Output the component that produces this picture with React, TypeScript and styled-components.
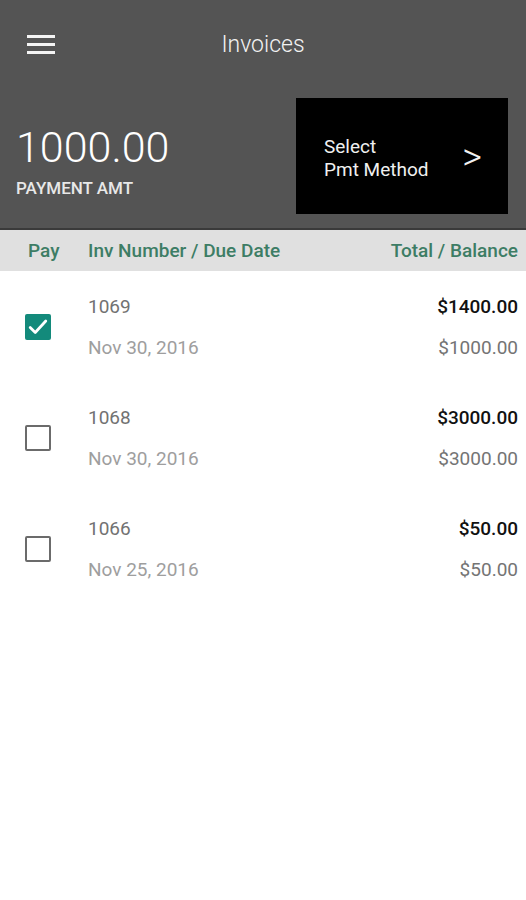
import styled, { createGlobalStyle } from "styled-components"

const GlobalStyle = createGlobalStyle`
    html, body {
        margin: 0;
        padding: 0;
        background: #ffffff;
        font-family: Roboto, "Liberation Sans", sans-serif;
    }
`

const Page = styled.div`
    width: 526px;
    min-height: 900px;
    background: #ffffff;
`

const Header = styled.header`
    background-color: #545454;
    border-bottom: 2px solid #3a3a3a;
`

const Toolbar = styled.div`
    height: 88px;
    display: grid;
    grid-template-columns: 80px 1fr 80px;
    align-items: center;
`

const MenuButton = styled.button`
    background: none;
    border: none;
    padding: 0 0 0 27px;
    display: flex;
    flex-direction: column;
    gap: 5px;
    cursor: pointer;

    span {
        display: block;
        width: 28px;
        height: 3px;
        background: #f4f4f4;
    }
`

const Title = styled.h1`
    margin: 0;
    text-align: center;
    color: #f2f2f2;
    font-size: 23px;
    font-weight: 300;
`

const Summary = styled.div`
    display: flex;
    justify-content: space-between;
    align-items: center;
    padding: 10px 18px 14px 16px;
`

const Amount = styled.div`
    display: flex;
    flex-direction: column;
    padding-top: 8px;
`

const AmountValue = styled.span`
    color: #ffffff;
    font-size: 43px;
    font-weight: 300;
    line-height: 50px;
`

const AmountLabel = styled.span`
    color: #e8e8e8;
    font-size: 17px;
    font-weight: 500;
    margin-top: 6px;
`

const MethodButton = styled.button`
    width: 212px;
    height: 116px;
    background: #000000;
    border: none;
    display: flex;
    align-items: center;
    justify-content: space-between;
    padding: 0 26px 0 28px;
    color: #f0f0f0;
    font-family: inherit;
    cursor: pointer;
`

const MethodText = styled.span`
    text-align: left;
    font-size: 19px;
    line-height: 23px;
    font-weight: 400;
    margin-top: 4px;
`

const Arrow = styled.span`
    font-size: 38px;
    font-weight: 300;
    margin-top: 2px;
`

const ColumnHeader = styled.div`
    height: 41px;
    background: #e0e0e0;
    display: grid;
    grid-template-columns: 88px 1fr auto;
    align-items: center;
    padding-right: 8px;
    color: #3d7d65;
    font-size: 19px;
    font-weight: 500;
`

const PayHead = styled.span`
    padding-left: 28px;
`

const Row = styled.div`
    height: 111px;
    display: grid;
    grid-template-columns: 88px 1fr auto;
    align-items: center;
    padding-right: 8px;
`

const Check = styled.span<{ $checked: boolean }>`
    margin-left: 25px;
    width: 26px;
    height: 26px;
    box-sizing: border-box;
    border-radius: 2px;
    display: flex;
    align-items: center;
    justify-content: center;
    background: ${(p) => (p.$checked ? "#138a7b" : "transparent")};
    border: ${(p) => (p.$checked ? "none" : "2.5px solid #6b6b6b")};
`

const Stack = styled.div<{ $align?: string }>`
    display: flex;
    flex-direction: column;
    gap: 20px;
    text-align: ${(p) => p.$align || "left"};
`

const InvNumber = styled.span`
    color: #727272;
    font-size: 19px;
    line-height: 21px;
`

const DueDate = styled.span`
    color: #9e9e9e;
    font-size: 19px;
    line-height: 21px;
`

const Total = styled.span`
    color: #111111;
    font-size: 19px;
    font-weight: 500;
    line-height: 21px;
`

const Balance = styled.span`
    color: #747474;
    font-size: 19px;
    line-height: 21px;
`

const invoices = [
    { num: "1069", due: "Nov 30, 2016", total: "$1400.00", balance: "$1000.00", checked: true },
    { num: "1068", due: "Nov 30, 2016", total: "$3000.00", balance: "$3000.00", checked: false },
    { num: "1066", due: "Nov 25, 2016", total: "$50.00", balance: "$50.00", checked: false },
]

export default function App() {
    return (
        <>
            <GlobalStyle />
            <Page>
                <Header>
                    <Toolbar>
                        <MenuButton aria-label="menu">
                            <span />
                            <span />
                            <span />
                        </MenuButton>
                        <Title>Invoices</Title>
                        <div />
                    </Toolbar>
                    <Summary>
                        <Amount>
                            <AmountValue>1000.00</AmountValue>
                            <AmountLabel>PAYMENT AMT</AmountLabel>
                        </Amount>
                        <MethodButton>
                            <MethodText>
                                Select
                                <br />
                                Pmt Method
                            </MethodText>
                            <Arrow>&gt;</Arrow>
                        </MethodButton>
                    </Summary>
                </Header>
                <ColumnHeader>
                    <PayHead>Pay</PayHead>
                    <span>Inv Number / Due Date</span>
                    <span>Total / Balance</span>
                </ColumnHeader>
                {invoices.map((inv) => (
                    <Row key={inv.num}>
                        <Check $checked={inv.checked}>
                            {inv.checked && (
                                <svg width="22" height="22" viewBox="0 0 24 24">
                                    <path d="M3.5 12.5l5.5 5.5L20.5 5.5" fill="none" stroke="#ffffff" strokeWidth="3" strokeLinecap="round" strokeLinejoin="round" />
                                </svg>
                            )}
                        </Check>
                        <Stack>
                            <InvNumber>{inv.num}</InvNumber>
                            <DueDate>{inv.due}</DueDate>
                        </Stack>
                        <Stack $align="right">
                            <Total>{inv.total}</Total>
                            <Balance>{inv.balance}</Balance>
                        </Stack>
                    </Row>
                ))}
            </Page>
        </>
    )
}
